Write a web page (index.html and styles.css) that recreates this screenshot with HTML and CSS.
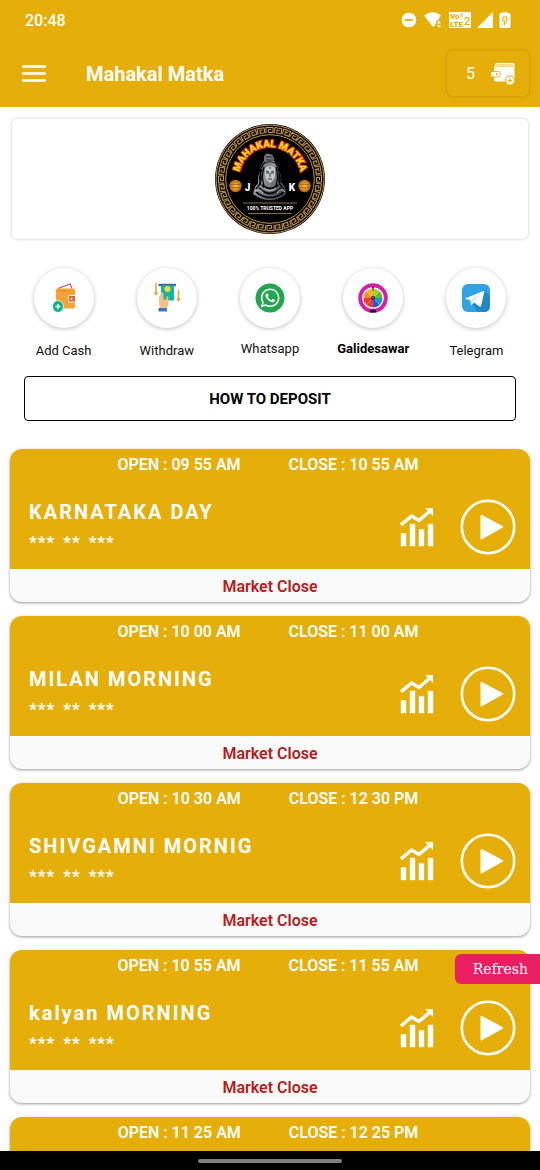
FILE: index.html
```html
<!DOCTYPE html>
<html lang="en">
<head>
    <meta charset="UTF-8">
    <meta name="viewport" content="width=device-width, initial-scale=1.0">
    <title>Mahakal Matka</title>
    <link rel="stylesheet" href="styles.css">
</head>
<body>
    <!-- Shared icons -->
    <svg class="sprite" width="0" height="0" aria-hidden="true">
        <symbol id="chart" viewBox="0 0 34 40">
            <path d="M1 18 L11.500 9 L19 13.500 L29.500 4.500" fill="none" stroke="currentColor" stroke-width="3.400"/>
            <path d="M25 1 H33 V9 Z" fill="currentColor"/>
            <path d="M1 26.500 h5 v12.500 h-5z M10 17 h5 v22 h-5z M19 22.500 h5 v16.500 h-5z M28 17 h5 v22 h-5z" fill="currentColor" stroke="currentColor" stroke-width=".4"/>
        </symbol>
        <symbol id="play" viewBox="0 0 56 56">
            <circle cx="28" cy="28" r="26.200" fill="none" stroke="currentColor" stroke-width="2.600"/>
            <path d="M21.500 17 L42 28 L21.500 39.500 Z" fill="currentColor" stroke="currentColor" stroke-width="2" stroke-linejoin="round"/>
        </symbol>
    </svg>

    <header class="header">
        <div class="status">
            <span class="clock">20:48</span>
            <div class="status-icons">
                <svg width="16" height="16" viewBox="0 0 16 16"><circle cx="8" cy="8" r="7.300" fill="#fff"/><path d="M4 8h8" stroke="#e6ae08" stroke-width="1.800"/></svg>
                <svg width="20" height="16" viewBox="0 0 20 16"><path d="M1 3.500 Q10 -3 18 3.500 L15 8 L13 10 V12 L10 15 Z" fill="#fff"/><path d="M14 11.500l2-3 2 3z M14 13l2 3 2-3z" fill="#fff"/></svg>
                <svg width="22" height="16" viewBox="0 0 22 16"><rect width="22" height="16" rx="1" fill="#fff"/><text x="1" y="7" class="lte-text">Vo</text><path d="M11 2h3 M11 4h3" stroke="#e6ae08"/><text x="1" y="15" class="lte-text">LTE</text><text x="15" y="13" class="lte-num">2</text></svg>
                <svg width="16" height="16" viewBox="0 0 16 16"><path d="M16 0V16H0Z" fill="#fff"/></svg>
                <svg width="12" height="16" viewBox="0 0 12 16"><path d="M3.500 1V0h5v1H10q1.500 0 1.500 1.500v12q0 1.500-1.500 1.500H2q-1.500 0-1.500-1.500v-12Q.5 1 2 1z" fill="#fff"/><path d="M4 5h4l-1 3h1.500L5 13l.5-4H3.500z" fill="none" stroke="#e6ae08"/></svg>
            </div>
        </div>
        <div class="appbar">
            <button class="menu" aria-label="Menu">
                <svg width="24" height="18" viewBox="0 0 24 18"><path d="M1 1.500H23M1 8.500H23M1 15.500H23" stroke="#fff" stroke-width="2.400" stroke-linecap="round"/></svg>
            </button>
            <h1>Mahakal Matka</h1>
            <button class="wallet" aria-label="Wallet balance 5">
                <span>5</span>
                <svg width="24" height="24" viewBox="0 0 24 24">
                    <path d="M4 4V3q0-2 2-2H22q1.500 0 1.500 2v1z" fill="#fff"/>
                    <path d="M5 2.900h17" stroke="#e6ae08" stroke-width=".8"/>
                    <path d="M3 4.500H23.500v15H5q-2 0-2-2z" fill="#fff"/>
                    <path d="M0 9.500h7.500q2 0 2 2.700t-2 2.700H0z" fill="#fff" stroke="#e6ae08" stroke-width=".8"/>
                    <circle cx="6" cy="12.200" r="1" fill="#e6ae08"/>
                    <circle cx="19" cy="18.500" r="4.600" fill="#fff" stroke="#e6ae08"/>
                    <path d="M16.500 18.500h5M19 16v5" stroke="#e6ae08"/>
                </svg>
            </button>
        </div>
    </header>

    <main class="content">
        <div class="banner">
            <svg class="logo" viewBox="-55 -55 110 110" role="img" aria-label="Mahakal Matka, 100% trusted app">
                <defs>
                    <radialGradient id="coin"><stop offset="0" stop-color="#ffc04a"/><stop offset="1" stop-color="#b9650d"/></radialGradient>
                    <linearGradient id="stone" x1="0" y1="0" x2="1" y2="1"><stop offset="0" stop-color="#4b4f54"/><stop offset=".45" stop-color="#8f9498"/><stop offset="1" stop-color="#303338"/></linearGradient>
                    <path id="arc" d="M-31 -1 A31 31 0 0 1 31 -1"/>
                    <path id="key" d="M-4 -46 V-51.500 H3 V-46.500 H-1.500 V-49.500 H1" fill="none" stroke="#c49a5c" stroke-width="1"/>
                    <g id="keys3"><use href="#key"/><use href="#key" transform="rotate(10)"/><use href="#key" transform="rotate(20)"/></g>
                    <g id="keys9"><use href="#keys3"/><use href="#keys3" transform="rotate(30)"/><use href="#keys3" transform="rotate(60)"/></g>
                </defs>
                <circle r="55" fill="#120d08"/>
                <circle r="54" fill="none" stroke="#b78d55" stroke-width="1"/>
                <circle r="44.300" fill="#000" stroke="#b78d55" stroke-width="1"/>
                <use href="#keys9"/><use href="#keys9" transform="rotate(90)"/><use href="#keys9" transform="rotate(180)"/><use href="#keys9" transform="rotate(270)"/>
                <text class="logo-glow"><textPath href="#arc" startOffset="50%">MAHAKAL MATKA</textPath></text>
                <text class="logo-name"><textPath href="#arc" startOffset="50%">MAHAKAL MATKA</textPath></text>
                <!-- statue -->
                <path d="M-6 -22 Q-5 -27 0 -25 Q5 -24 4 -18 Q9 -15 9 -8 Q12 -3 11 3 Q16 8 16 15 Q9 21 0 21 Q-9 21 -17 15 Q-16 8 -12 4 Q-13 -3 -10 -7 Q-10 -14 -6 -18 Z" fill="url(#stone)"/>
                <path d="M-5 -17 Q-11 -11 -9 -3 Q-8 4 -14 10 M5 -17 Q10 -10 9 -2 Q8 5 14 10 M-6 -12 Q-9 -2 -6 7 M6 -12 Q9 -2 6 7 M-8 -10 Q-12 0 -9 6 M8 -10 Q12 0 9 6" fill="none" stroke="#060708" stroke-width="1.300"/>
                <path d="M-4 -19H4 M-4 -22H4 M-5 -16Q0 -19 5 -16" stroke="#1c1f22" fill="none" stroke-width="1"/>
                <path d="M-5 -11 Q0 -15 5 -11 L5 -4 Q4 2 0 4 Q-4 2 -5 -4Z" fill="#c4c8cb"/>
                <path d="M-4 -6H-1 M1 -6H4 M-4 -8L-1 -7 M4 -8L1 -7 M0 -6V-2 M-2 0H2 M-1 -11H1" stroke="#24272b" stroke-width=".9"/>
                <path d="M-8 6 Q0 13 8 6 M-11 9 Q0 20 11 9 M-14 13 Q0 24 14 13" fill="none" stroke="#0b0d0f" stroke-width="2"/>
                <path d="M-15 13 Q-10 8 -7 14 M15 13 Q10 8 7 14 M-6 9 Q0 14 6 9" fill="none" stroke="#ced1d4" stroke-width=".9"/>
                <circle cx="-34.500" cy="7" r="6.200" fill="url(#coin)"/>
                <circle cx="34.500" cy="7" r="6.200" fill="url(#coin)"/>
                <path d="M-39.500 5.500h10M-39.500 8.500h10M29.500 5.500h10M29.500 8.500h10" stroke="#8d4b0c" stroke-width=".6"/>
                <text x="-22.500" y="11.500" class="logo-letter">J</text>
                <text x="22" y="11.500" class="logo-letter">K</text>
                <path d="M-27 24H27M-22 34.500H22" stroke="#a98d60" stroke-width=".8"/>
                <text x="0" y="31" class="logo-tag">100% TRUSTED APP</text>
            </svg>
        </div>

        <nav class="actions">
            <a href="#" class="action">
                <span class="bubble">
                    <svg width="30" height="30" viewBox="0 0 30 30">
                        <path d="M9 5.500 L21 1 L23 5.500" fill="#fff" stroke="#c9564a" stroke-width="1.200"/>
                        <path d="M8 5.500H24q2 0 2 2V23.500q0 2-2 2H9q-2 0-2-2V6.500z" fill="#f6a235"/>
                        <path d="M9 8H22" stroke="#e08b25" stroke-width=".8"/>
                        <rect x="19.500" y="12.500" width="7" height="6.500" rx="1" fill="#de6337" stroke="#fff"/>
                        <circle cx="22.500" cy="15.700" r="1" fill="#fff"/>
                        <ellipse cx="9" cy="23.500" rx="5.500" ry="6" fill="#10b28c" stroke="#fff" stroke-width=".8"/>
                        <path d="M6.500 23.500h5M9 21v5" stroke="#fff" stroke-width="1.500"/>
                    </svg>
                </span>
                <span class="label">Add Cash</span>
            </a>
            <a href="#" class="action">
                <span class="bubble">
                    <svg width="30" height="30" viewBox="0 0 30 30">
                        <path d="M6.500 2H24" stroke="#416a9b" stroke-width="2.500"/>
                        <rect x="9" y="2.500" width="13" height="15" fill="#12b79c"/>
                        <circle cx="15.500" cy="6" r="3" fill="#f7d842"/>
                        <path d="M7 14.500l2.500-5q1.500-1 2 1v6h3v-3q2-1 2 2v6l-2 4H8l-1-5z" fill="#f4c18a"/>
                        <rect x="6.500" y="25" width="8.500" height="3.500" fill="#3878cc"/>
                        <path d="M4 0V11M2.500 9.500l1.500 2 1.500-2M26.500 7v10M25 15.500l1.500 2 1.500-2" fill="none" stroke="#eba43c" stroke-width="1.600"/>
                    </svg>
                </span>
                <span class="label">Withdraw</span>
            </a>
            <a href="#" class="action">
                <span class="bubble">
                    <svg width="30" height="30" viewBox="0 0 30 30">
                        <circle cx="15" cy="15" r="14.500" fill="#25a451"/>
                        <path transform="translate(5.800 5.500) scale(.78)" fill="#fff" d="M17.472 14.382c-.297-.149-1.758-.867-2.030-.967-.273-.099-.471-.148-.67.15-.197.297-.767.966-.94 1.164-.173.199-.347.223-.644.075-.297-.15-1.255-.463-2.390-1.475-.883-.788-1.480-1.761-1.653-2.059-.173-.297-.018-.458.13-.606.134-.133.298-.347.446-.52.149-.174.198-.298.298-.497.099-.198.05-.371-.025-.52-.075-.149-.669-1.612-.916-2.207-.242-.579-.487-.5-.669-.51-.173-.008-.371-.01-.57-.01-.198 0-.52.074-.792.372-.272.297-1.040 1.016-1.040 2.479 0 1.462 1.065 2.875 1.213 3.074.149.198 2.096 3.200 5.077 4.487.709.306 1.262.489 1.694.625.712.227 1.360.195 1.871.118.571-.085 1.758-.719 2.006-1.413.248-.694.248-1.289.173-1.413-.074-.124-.272-.198-.57-.347m-5.421 7.403h-.004a9.870 9.870 0 0 1-5.031-1.378l-.361-.214-3.741.982.998-3.648-.235-.374a9.860 9.860 0 0 1-1.510-5.260c.001-5.450 4.436-9.884 9.888-9.884 2.640 0 5.122 1.030 6.988 2.898a9.825 9.825 0 0 1 2.893 6.994c-.003 5.450-4.437 9.884-9.885 9.884m8.413-18.297A11.815 11.815 0 0 0 12.050 0C5.495 0 .16 5.335.157 11.892c0 2.096.547 4.142 1.588 5.945L.057 24l6.305-1.654a11.882 11.882 0 0 0 5.683 1.448h.005c6.554 0 11.890-5.335 11.893-11.893a11.821 11.821 0 0 0-3.480-8.413z"/>
                    </svg>
                </span>
                <span class="label label-short">Whatsapp</span>
            </a>
            <a href="#" class="action">
                <span class="bubble">
                    <svg width="30" height="30" viewBox="0 0 30 30">
                        <circle cx="15" cy="15" r="12.800" fill="#fff" stroke="#d61fa6" stroke-width="4"/>
                        <path d="M15 15V5.500A9.500 9.500 0 0 0 8.300 8.300z" fill="#f3b51c"/>
                        <path d="M15 15L8.300 8.300A9.500 9.500 0 0 0 5.500 15z" fill="#f68d20"/>
                        <path d="M15 15H5.500A9.500 9.500 0 0 0 8.300 21.700z" fill="#ed3b2c"/>
                        <path d="M15 15L8.300 21.700A9.500 9.500 0 0 0 15 24.500z" fill="#e8402a"/>
                        <path d="M15 15V24.500A9.500 9.500 0 0 0 21.700 21.700z" fill="#1f59dc"/>
                        <path d="M15 15L21.700 21.700A9.500 9.500 0 0 0 24.500 15z" fill="#2494c8"/>
                        <path d="M15 15H24.500A9.500 9.500 0 0 0 21.700 8.300z" fill="#62b83b"/>
                        <path d="M15 15L21.700 8.300A9.500 9.500 0 0 0 15 5.500z" fill="#a5cf38"/>
                        <path d="M14 3.500h2l-1 5z M12.500 26.500h5l1 3h-7z" fill="#26123a"/>
                        <circle cx="15" cy="15" r="2" fill="#111"/><circle cx="15" cy="15" r=".7" fill="#fff"/>
                    </svg>
                </span>
                <span class="label label-short label-bold">Galidesawar</span>
            </a>
            <a href="#" class="action">
                <span class="bubble">
                    <svg width="30" height="30" viewBox="0 0 30 30">
                        <rect x="1" y="1" width="28" height="28" rx="6" fill="#30a3e2"/>
                        <path d="M23 7L29 13V23q0 6-6 6H17L12 22z" fill="#2189c4"/>
                        <path d="M4 15.500L22.500 8q1-.3.800.8L20 23q-.4 1.200-1.500.5L13 19.500l-3 3-.5-5z" fill="#fff"/>
                        <path d="M9.500 17.500L20 10.500l-8.500 8-1.500 4z" fill="#c9dff0"/>
                    </svg>
                </span>
                <span class="label">Telegram</span>
            </a>
        </nav>

        <button class="deposit">HOW TO DEPOSIT</button>

        <section class="markets">
            <article class="market">
                <div class="market-top">
                    <div class="times"><span>OPEN : 09 55 AM</span><span>CLOSE : 10 55 AM</span></div>
                    <div class="market-row">
                        <div class="market-info">
                            <h2>KARNATAKA DAY</h2>
                            <div class="result"><span>***</span><span>**</span><span>***</span></div>
                        </div>
                        <button class="icon-btn" aria-label="Chart"><svg width="34" height="40"><use href="#chart"/></svg></button>
                        <button class="icon-btn" aria-label="Play"><svg width="56" height="56"><use href="#play"/></svg></button>
                    </div>
                </div>
                <p class="market-status">Market Close</p>
            </article>

            <article class="market">
                <div class="market-top">
                    <div class="times"><span>OPEN : 10 00 AM</span><span>CLOSE : 11 00 AM</span></div>
                    <div class="market-row">
                        <div class="market-info">
                            <h2>MILAN MORNING</h2>
                            <div class="result"><span>***</span><span>**</span><span>***</span></div>
                        </div>
                        <button class="icon-btn" aria-label="Chart"><svg width="34" height="40"><use href="#chart"/></svg></button>
                        <button class="icon-btn" aria-label="Play"><svg width="56" height="56"><use href="#play"/></svg></button>
                    </div>
                </div>
                <p class="market-status">Market Close</p>
            </article>

            <article class="market">
                <div class="market-top">
                    <div class="times"><span>OPEN : 10 30 AM</span><span>CLOSE : 12 30 PM</span></div>
                    <div class="market-row">
                        <div class="market-info">
                            <h2>SHIVGAMNI MORNIG</h2>
                            <div class="result"><span>***</span><span>**</span><span>***</span></div>
                        </div>
                        <button class="icon-btn" aria-label="Chart"><svg width="34" height="40"><use href="#chart"/></svg></button>
                        <button class="icon-btn" aria-label="Play"><svg width="56" height="56"><use href="#play"/></svg></button>
                    </div>
                </div>
                <p class="market-status">Market Close</p>
            </article>

            <article class="market">
                <div class="market-top">
                    <div class="times"><span>OPEN : 10 55 AM</span><span>CLOSE : 11 55 AM</span></div>
                    <div class="market-row">
                        <div class="market-info">
                            <h2>kalyan MORNING</h2>
                            <div class="result"><span>***</span><span>**</span><span>***</span></div>
                        </div>
                        <button class="icon-btn" aria-label="Chart"><svg width="34" height="40"><use href="#chart"/></svg></button>
                        <button class="icon-btn" aria-label="Play"><svg width="56" height="56"><use href="#play"/></svg></button>
                    </div>
                </div>
                <p class="market-status">Market Close</p>
            </article>

            <article class="market">
                <div class="market-top">
                    <div class="times"><span>OPEN : 11 25 AM</span><span>CLOSE : 12 25 PM</span></div>
                </div>
            </article>
        </section>
    </main>

    <button class="refresh">Refresh</button>
    <footer class="gesture"><span class="gesture-bar"></span></footer>
</body>
</html>
```
FILE: styles.css
```css
* {
    box-sizing: border-box;
}

body {
    margin: 0;
    height: 100vh;
    display: flex;
    flex-direction: column;
    position: relative;
    overflow: hidden;
    background: #fff;
    color: #111;
    font-family: Roboto, "Liberation Sans", sans-serif;
}

button {
    font-family: inherit;
    color: inherit;
    background: none;
    border: none;
    padding: 0;
    cursor: pointer;
}

svg {
    display: block;
}

.sprite {
    position: absolute;
}

/* Header */
.header {
    flex: none;
    background: #e6ae08;
    color: #fff;
}

.status {
    display: flex;
    justify-content: space-between;
    align-items: center;
    height: 40px;
    padding: 0 29px 0 25px;
}

.clock {
    font-size: 16px;
    font-weight: 500;
}

.status-icons {
    display: flex;
    gap: 6px;
}

.lte-text {
    font-size: 8px;
    font-weight: 900;
    fill: #e6ae08;
}

.lte-num {
    font-size: 11px;
    font-weight: 500;
    fill: #e6ae08;
}

.appbar {
    display: flex;
    align-items: center;
    height: 67px;
    padding: 0 11px 0 22px;
}

.appbar h1 {
    flex: 1;
    margin: 0 0 0 40px;
    font-size: 20px;
    line-height: 24px;
    font-weight: 700;
}

.wallet {
    display: flex;
    align-items: center;
    gap: 16px;
    height: 45px;
    padding: 0 14px 0 19px;
    border-radius: 5px;
    box-shadow: 0 0 3px rgba(120, 80, 0, 0.4);
    font-size: 16px;
}

/* Content */
.content {
    flex: 1;
    min-height: 0;
    overflow: hidden;
    padding: 12px 10px 0;
}

.banner {
    display: flex;
    justify-content: center;
    padding: 5px;
    margin: 0 2px;
    border-radius: 5px;
    box-shadow: 0 0 3px rgba(0, 0, 0, 0.25);
}

.logo {
    width: 110px;
    height: 110px;
}

.logo-name,
.logo-glow {
    font-size: 10px;
    font-weight: 900;
    text-anchor: middle;
    fill: #ffd52e;
}

.logo-glow {
    stroke: #d63b08;
    stroke-width: 2px;
}

.logo-letter {
    font-size: 10px;
    font-weight: 900;
    text-anchor: middle;
    fill: #fff;
}

.logo-tag {
    font-size: 5px;
    font-weight: 700;
    text-anchor: middle;
    fill: #fff;
}

.actions {
    display: grid;
    grid-template-columns: repeat(5, 1fr);
    margin: 29px 2px 0;
}

.action {
    display: flex;
    flex-direction: column;
    align-items: center;
    gap: 13px;
    color: #111;
    text-decoration: none;
}

.bubble {
    display: flex;
    justify-content: center;
    align-items: center;
    width: 60px;
    height: 60px;
    border-radius: 50%;
    box-shadow: 0 1px 4px rgba(0, 0, 0, 0.25);
}

.label {
    font-size: 13px;
    line-height: 20px;
}

.label-short {
    line-height: 16px;
}

.label-bold {
    font-weight: 700;
    color: #000;
}

.deposit {
    display: block;
    width: calc(100% - 28px);
    height: 45px;
    margin: 15px 14px 28px;
    border: 1px solid #000;
    border-radius: 4px;
    color: #000;
    font-size: 15px;
    font-weight: 700;
}

/* Market cards */
.markets {
    display: flex;
    flex-direction: column;
    gap: 14px;
}

.market {
    border-radius: 12px;
    overflow: hidden;
    background: #fafafa;
    box-shadow: 0 1px 3px rgba(0, 0, 0, 0.4);
}

.market-top {
    min-height: 120px;
    padding-top: 6px;
    background: #e6ae08;
    color: #fff;
}

.times {
    display: flex;
    justify-content: center;
    gap: 48px;
    padding-right: 4px;
    font-size: 16px;
    line-height: 20px;
    font-weight: 600;
}

.market-row {
    display: flex;
    align-items: center;
    padding: 22px 14px 0 19px;
}

.market-info {
    flex: 1;
}

.market h2 {
    margin: 0;
    font-size: 20px;
    line-height: 30px;
    font-weight: 700;
    letter-spacing: 2px;
}

.result {
    display: flex;
    gap: 8px;
    font-size: 17px;
    line-height: 30px;
    font-weight: 700;
    letter-spacing: 1px;
}

.icon-btn + .icon-btn {
    margin-left: 26px;
}

.market-status {
    margin: 0;
    padding-top: 2px;
    font-size: 16px;
    line-height: 31px;
    font-weight: 600;
    text-align: center;
    color: #b71c1c;
}

/* Floating refresh button */
.refresh {
    position: absolute;
    right: 0;
    bottom: 186px;
    padding: 0 12px 0 18px;
    border-radius: 6px 0 0 6px;
    background: #e91e63;
    color: #fff;
    font-family: "DejaVu Serif", serif;
    font-size: 14px;
    line-height: 30px;
}

/* Bottom gesture area */
.gesture {
    flex: none;
    display: flex;
    justify-content: center;
    align-items: center;
    height: 19px;
    background: #000;
}

.gesture-bar {
    width: 144px;
    height: 4px;
    border-radius: 2px;
    background: #808080;
}
```
